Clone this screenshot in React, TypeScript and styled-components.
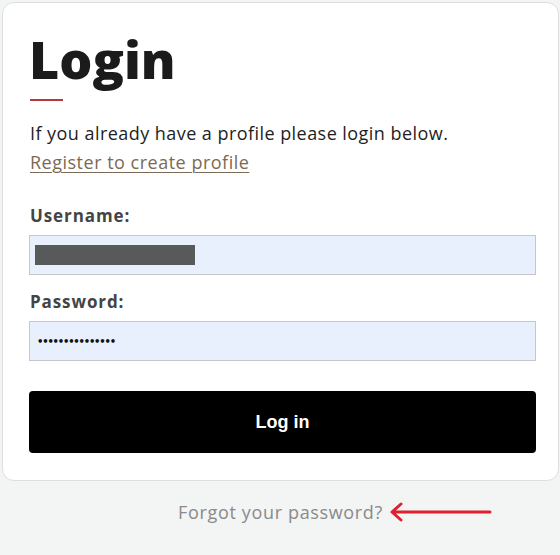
import React from "react";
import styled, { createGlobalStyle } from "styled-components";

const GlobalStyle = createGlobalStyle`
  html, body {
    margin: 0;
    padding: 0;
    background: #f3f4f4;
  }
  body {
    font-family: "Open Sans", "Noto Sans", sans-serif;
    color: #1c1c1c;
  }
`;

const Page = styled.div`
  width: 560px;
  min-height: 555px;
  padding: 2px 1px 0 2px;
  box-sizing: border-box;
`;

const Card = styled.div`
  background: #ffffff;
  border: 1px solid #dedede;
  border-radius: 12px;
  padding: 26px 22px 27px 26px;
`;

const Title = styled.h1`
  margin: 0;
  font-size: 52px;
  line-height: 60px;
  font-weight: 800;
  color: #1b1b1b;
  letter-spacing: 0;
`;

const Accent = styled.div`
  width: 33px;
  height: 2px;
  background: #b23a3a;
  margin: 10px 0 18px 1px;
`;

const Intro = styled.p`
  margin: 0 0 0 1px;
  font-size: 18px;
  line-height: 28px;
  letter-spacing: 0.45px;
  color: #1e1e1e;
`;

const RegisterLink = styled.a`
  display: inline-block;
  margin: 1px 0 0 1px;
  font-size: 18px;
  line-height: 28px;
  letter-spacing: 0.5px;
  color: #7b6a55;
  text-decoration: underline;
  text-underline-offset: 3px;
  text-decoration-thickness: 1px;
`;

const Form = styled.form`
  display: flex;
  flex-direction: column;
  margin-top: 28px;
`;

const Label = styled.label<{ $gap?: number }>`
  font-size: 17px;
  line-height: 24px;
  font-weight: 700;
  letter-spacing: 0.9px;
  color: #444444;
  margin-left: 1px;
  margin-top: ${(p) => p.$gap ?? 0}px;
`;

const Field = styled.div`
  margin-top: 7px;
  height: 40px;
  box-sizing: border-box;
  background: #e8f0fe;
  border: 1px solid #c7c7c9;
  display: flex;
  align-items: center;
  padding: 0 5px;
`;

const Redacted = styled.div`
  width: 160px;
  height: 20px;
  background: #58595b;
`;

const Dots = styled.span`
  font-family: "DejaVu Sans", sans-serif;
  font-size: 10px;
  font-weight: 700;
  letter-spacing: -1.2px;
  color: #111;
  padding-left: 2px;
`;

const Submit = styled.button`
  margin-top: 30px;
  height: 62px;
  border: none;
  border-radius: 4px;
  background: #000000;
  color: #ffffff;
  font-family: "Liberation Sans", Arial, sans-serif;
  font-weight: 700;
  font-size: 18px;
  cursor: pointer;
`;

const Footer = styled.div`
  display: flex;
  justify-content: center;
  margin-top: 19px;
`;

const ForgotWrap = styled.span`
  position: relative;
  font-size: 18px;
  line-height: 24px;
  letter-spacing: 0.65px;
  color: #8a8a8a;
`;

const Arrow = styled.svg`
  position: absolute;
  left: calc(100% + 7px);
  top: 1px;
`;

export default function App() {
  return (
    <>
      <GlobalStyle />
      <Page>
        <Card>
          <Title>Login</Title>
          <Accent />
          <Intro>If you already have a profile please login below.</Intro>
          <RegisterLink href="#">Register to create profile</RegisterLink>
          <Form onSubmit={(e) => e.preventDefault()}>
            <Label>Username:</Label>
            <Field>
              <Redacted />
            </Field>
            <Label $gap={15}>Password:</Label>
            <Field>
              <Dots>{"\u2022".repeat(15)}</Dots>
            </Field>
            <Submit type="submit">Log in</Submit>
          </Form>
        </Card>
        <Footer>
          <ForgotWrap>
            Forgot your password?
            <Arrow width="102" height="24" viewBox="0 0 102 24">
              <path
                d="M100 11 H3 M11 3 L2 11 L11 19"
                fill="none"
                stroke="#e0202f"
                strokeWidth="3"
                strokeLinecap="round"
                strokeLinejoin="round"
              />
            </Arrow>
          </ForgotWrap>
        </Footer>
      </Page>
    </>
  );
}
